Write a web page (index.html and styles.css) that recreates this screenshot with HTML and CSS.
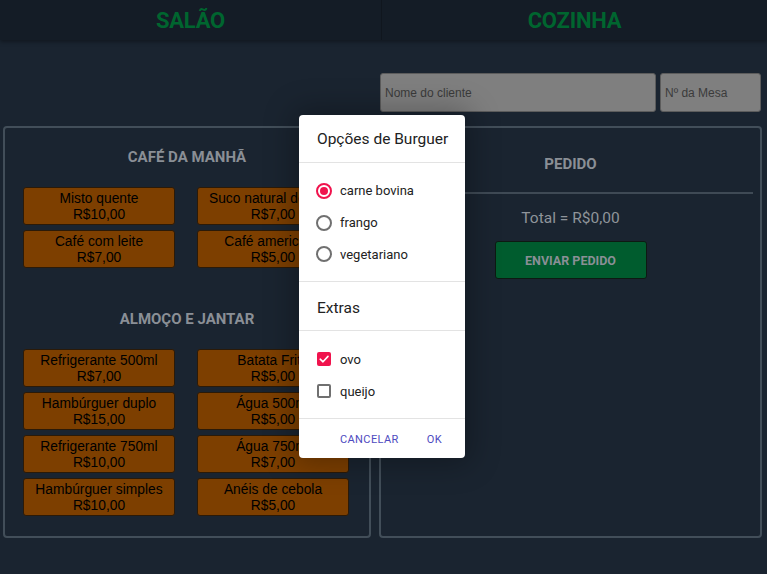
FILE: index.html
```html
<!DOCTYPE html>
<html lang="pt-BR">
<head>
<meta charset="utf-8">
<title>Restaurante</title>
<link rel="stylesheet" href="styles.css">
</head>
<body>
<header class="topbar">
  <div class="tab">SALÃO</div>
  <div class="tab">COZINHA</div>
</header>
<main class="main">
  <div class="spacer"></div>
  <div class="inputs">
    <input class="field field-name" type="text" placeholder="Nome do cliente">
    <input class="field field-table" type="text" placeholder="Nº da Mesa">
  </div>
  <section class="panel menu">
    <h2 class="section-title first">CAFÉ DA MANHÃ</h2>
    <div class="items">
      <button class="item">Misto quente<br>R$10,00</button>
      <button class="item">Suco natural de fruta<br>R$7,00</button>
      <button class="item">Café com leite<br>R$7,00</button>
      <button class="item">Café americano<br>R$5,00</button>
    </div>
    <h2 class="section-title second">ALMOÇO E JANTAR</h2>
    <div class="items">
      <button class="item">Refrigerante 500ml<br>R$7,00</button>
      <button class="item">Batata Frita<br>R$5,00</button>
      <button class="item">Hambúrguer duplo<br>R$15,00</button>
      <button class="item">Água 500ml<br>R$5,00</button>
      <button class="item">Refrigerante 750ml<br>R$10,00</button>
      <button class="item">Água 750ml<br>R$7,00</button>
      <button class="item">Hambúrguer simples<br>R$10,00</button>
      <button class="item">Anéis de cebola<br>R$5,00</button>
    </div>
  </section>
  <section class="panel order">
    <h2 class="order-title">PEDIDO</h2>
    <hr class="rule">
    <p class="total">Total = R$0,00</p>
    <button class="send">ENVIAR PEDIDO</button>
  </section>
</main>

<div class="dialog">
  <div class="dlg-head">Opções de Burguer</div>
  <div class="dlg-group radios">
    <label class="opt"><span class="radio checked"></span>carne bovina</label>
    <label class="opt"><span class="radio"></span>frango</label>
    <label class="opt"><span class="radio"></span>vegetariano</label>
  </div>
  <div class="dlg-head sub">Extras</div>
  <div class="dlg-group checks">
    <label class="opt"><span class="check checked"><svg viewBox="0 0 14 14" width="14" height="14"><path d="M3.2 7.2 L6 9.8 L11 4.4" fill="none" stroke="#fff" stroke-width="1.6" stroke-linecap="round" stroke-linejoin="round"/></svg></span>ovo</label>
    <label class="opt"><span class="check"></span>queijo</label>
  </div>
  <div class="dlg-actions">
    <button class="act">CANCELAR</button>
    <button class="act">OK</button>
  </div>
</div>
</body>
</html>
```

FILE: styles.css
```css
* { box-sizing: border-box; }
html, body { margin: 0; padding: 0; }
body {
  background: #1a2430;
  font-family: Roboto, "Liberation Sans", Arial, sans-serif;
  width: 767px;
  height: 574px;
  overflow: hidden;
  position: relative;
}
.topbar {
  display: grid;
  grid-template-columns: 381px 1px 1fr;
  height: 40px;
  background: #141c26;
  box-shadow: 0 2px 4px rgba(0,0,0,0.35);
  position: relative;
}
.topbar::before {
  content: "";
  grid-column: 2;
  grid-row: 1;
  background: #10161e;
}
.tab {
  display: flex;
  align-items: center;
  justify-content: center;
  color: #00652f;
  font-weight: 700;
  font-size: 22px;
  letter-spacing: -0.2px;
  padding-top: 1px;
}
.tab:first-child { grid-column: 1; grid-row: 1; }
.tab:last-child { grid-column: 3; grid-row: 1; }

.main {
  display: grid;
  grid-template-columns: 368px 383px;
  column-gap: 8px;
  row-gap: 14px;
  padding-left: 3px;
  margin-top: 33px;
}
.inputs {
  display: flex;
  gap: 4px;
  padding-left: 1px;
}
.field {
  height: 39px;
  background: #7f7f7f;
  border: 1px solid #5c5c5c;
  border-radius: 3px;
  padding: 0 4px;
  font-family: "Liberation Sans", Arial, sans-serif;
  font-size: 12px;
  color: #333;
  outline: none;
}
.field::placeholder { color: #3b3b3b; }
.field-name { width: 276px; }
.field-table { width: 101px; }

.panel {
  height: 412px;
  border: 2px solid #424e59;
  border-radius: 4px;
}
.menu {
  display: flex;
  flex-direction: column;
  align-items: center;
}
.section-title {
  margin: 0;
  font-size: 15px;
  line-height: 18px;
  font-weight: 700;
  color: #8a8f96;
}
.section-title.first { margin-top: 20px; }
.section-title.second { margin-top: 42px; }
.items {
  display: grid;
  grid-template-columns: 152px 152px;
  column-gap: 22px;
  row-gap: 5px;
  margin-top: 21px;
  margin-right: 2px;
}
.item {
  height: 38px;
  background: #7d3f00;
  border: 1px solid #2b1a08;
  border-radius: 3px;
  font-family: "Liberation Sans", Arial, sans-serif;
  font-size: 13.8px;
  line-height: 16px;
  color: #000;
  padding: 1px 1px 0;
  white-space: nowrap;
  overflow: hidden;
  text-align: center;
}

.order {
  display: flex;
  flex-direction: column;
  align-items: center;
}
.order-title {
  margin: 27px 0 0;
  font-size: 15px;
  line-height: 18px;
  font-weight: 700;
  color: #8a8f96;
}
.rule {
  align-self: stretch;
  margin: 19px 7px 0 0;
  border: 0;
  border-top: 2px solid #3f4a55;
}
.total {
  margin: 15px 0 0;
  font-size: 15.5px;
  line-height: 18px;
  color: #8f949a;
}
.send {
  margin-top: 14px;
  width: 152px;
  height: 38px;
  background: #005c2e;
  border: 1px solid #0d1a12;
  border-radius: 3px;
  color: #8a8f96;
  font-family: Roboto, "Liberation Sans", sans-serif;
  font-weight: 700;
  font-size: 12.5px;
}

.dialog {
  position: absolute;
  left: 299px;
  top: 115px;
  width: 166px;
  height: 343px;
  background: #fff;
  border-radius: 4px;
  box-shadow: 0 0 30px 6px rgba(0,0,0,0.28);
  display: flex;
  flex-direction: column;
}
.dlg-head {
  height: 48px;
  display: flex;
  align-items: center;
  padding: 1px 0 0 18px;
  font-size: 15.5px;
  color: #222;
  border-bottom: 1px solid #e3e3e3;
}
.dlg-head.sub { height: 49px; padding-top: 3px; }
.dlg-group {
  display: flex;
  flex-direction: column;
  border-bottom: 1px solid #e3e3e3;
}
.radios { padding: 12px 0 11px; height: 119px; }
.checks { padding: 12px 0 11px; height: 88px; }
.opt {
  height: 32px;
  display: flex;
  align-items: center;
  font-size: 13px;
  color: #222;
}
.radios .opt { padding-left: 17px; }
.radio {
  width: 16px;
  height: 16px;
  border: 2px solid #707070;
  border-radius: 50%;
  margin-right: 8px;
  flex: none;
  position: relative;
}
.radio.checked { border-color: #f0134d; }
.radio.checked::after {
  content: "";
  position: absolute;
  left: 2px;
  top: 2px;
  width: 8px;
  height: 8px;
  border-radius: 50%;
  background: #f0134d;
}
.checks .opt { padding-left: 18px; }
.check {
  width: 14px;
  height: 14px;
  border: 2px solid #707070;
  border-radius: 2px;
  margin-right: 9px;
  flex: none;
  display: flex;
  align-items: center;
  justify-content: center;
}
.check.checked { background: #f0134d; border-color: #f0134d; }
.check svg { flex: none; margin: -2px; }
.dlg-actions {
  flex: 1;
  display: flex;
  justify-content: flex-end;
  align-items: center;
  gap: 14px;
  padding: 1px 16px 0 0;
}
.act {
  background: none;
  border: 0;
  font-family: Roboto, "Liberation Sans", sans-serif;
  font-size: 11px;
  font-weight: 400;
  letter-spacing: 0.4px;
  color: #4e4ac0;
  padding: 6px 7px;
}
```
